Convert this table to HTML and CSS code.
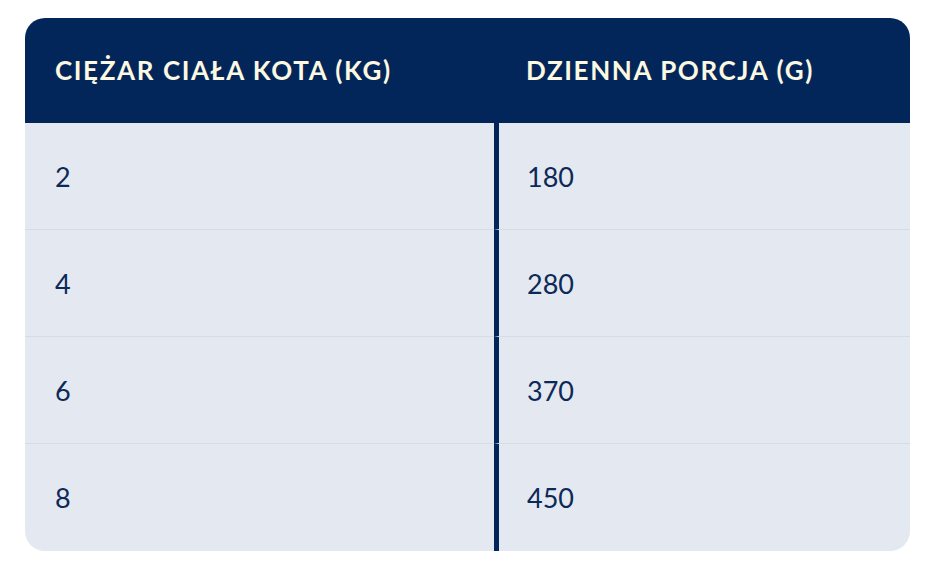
FILE: index.html
```html
<!DOCTYPE html>
<html lang="pl">
<head>
<meta charset="utf-8">
<link rel="stylesheet" href="styles.css">
</head>
<body>
<div class="wrap">
  <table class="portions">
    <thead>
      <tr><th class="c1">CIĘŻAR CIAŁA KOTA (KG)</th><th class="c2">DZIENNA PORCJA (G)</th></tr>
    </thead>
    <tbody>
      <tr><td class="c1">2</td><td class="c2">180</td></tr>
      <tr><td class="c1">4</td><td class="c2">280</td></tr>
      <tr><td class="c1">6</td><td class="c2">370</td></tr>
      <tr class="last"><td class="c1">8</td><td class="c2">450</td></tr>
    </tbody>
  </table>
</div>
</body>
</html>
```
FILE: styles.css
```css
html, body { margin: 0; padding: 0; background: #ffffff; }
body { font-family: Lato, "Open Sans", sans-serif; }
.wrap { padding: 18px 27px 10px 25px; }
.portions {
  width: 885px;
  border-collapse: separate;
  border-spacing: 0;
  border-radius: 20px;
  overflow: hidden;
  table-layout: fixed;
}
.portions th {
  background: #022659;
  color: #fdf8e1;
  font-weight: 700;
  font-size: 26px;
  letter-spacing: 1.6px;
  text-align: left;
  height: 105px;
  padding: 0 0 2px 30px;
  box-sizing: border-box;
  vertical-align: middle;
}
.portions th.c1 { width: 469px; }
.portions th.c2 { padding-left: 32px; }
.portions td {
  background: #e4e8f0;
  color: #0c2a58;
  font-size: 27px;
  height: 107px;
  box-sizing: border-box;
  padding: 0 0 0 30px;
  border-bottom: 1px solid #d6dce6;
  vertical-align: middle;
}
.portions td.c2 { border-left: 5px solid #022659; padding-left: 28px; }
.portions tr.last td { border-bottom: 0; }
```
